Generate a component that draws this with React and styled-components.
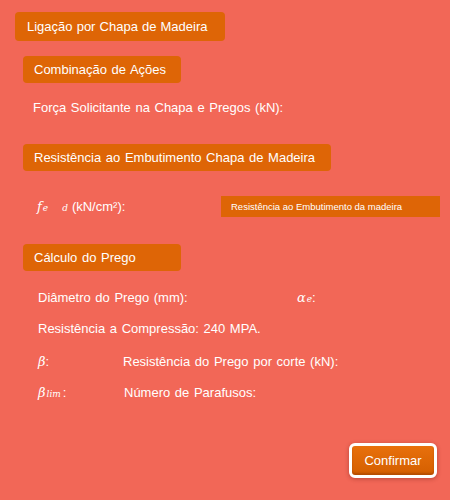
import React from "react";
import styled, { createGlobalStyle } from "styled-components";

const GlobalStyle = createGlobalStyle`
  html, body {
    margin: 0;
    padding: 0;
    background-color: #f26757;
  }
  #root {
    min-height: 500px;
  }
`;

const Page = styled.div`
  width: 450px;
  height: 500px;
  box-sizing: border-box;
  padding: 12px 0 0 0;
  display: flex;
  flex-direction: column;
  font-family: "Liberation Sans", Arial, sans-serif;
  font-size: 13px;
  color: #fff;
  background-color: #f26757;
`;

const Title = styled.div`
  width: 210px;
  height: 29px;
  margin-left: 15px;
  box-sizing: border-box;
  padding-left: 12px;
  display: flex;
  align-items: center;
  background-color: #de6506;
  border-radius: 4px;
  font-size: 13px;
  word-spacing: 0.5px;
`;

const SectionHeader = styled.div`
  width: ${(props) => props.width}px;
  height: 27px;
  margin-left: 23px;
  margin-top: ${(props) => props.top}px;
  box-sizing: border-box;
  padding-left: 11px;
  display: flex;
  align-items: center;
  background-color: #de6506;
  border-radius: 4px;
  font-size: 13px;
  word-spacing: 1px;
`;

const Row = styled.div`
  display: flex;
  align-items: center;
  height: 16px;
  margin-top: ${(props) => props.top}px;
  padding-left: ${(props) => props.left}px;
  word-spacing: 1px;
  white-space: nowrap;
`;

const Cell = styled.span`
  width: ${(props) => (props.width ? `${props.width}px` : "auto")};
  flex-shrink: 0;
  display: inline-flex;
  align-items: baseline;
`;

const MathVar = styled.span`
  font-family: "DejaVu Serif", "Liberation Serif", serif;
  font-style: italic;
  font-size: 13px;
  word-spacing: 0;
`;

const Sub = styled.sub`
  font-family: "DejaVu Serif", "Liberation Serif", serif;
  font-style: italic;
  font-size: 9px;
  vertical-align: -3px;
  margin-left: ${(props) => props.gap || 1}px;
`;

const InfoBox = styled.div`
  width: 219px;
  height: 21px;
  margin-left: auto;
  margin-right: 10px;
  box-sizing: border-box;
  padding-left: 10px;
  display: flex;
  align-items: center;
  background-color: #de6506;
  font-size: 9.5px;
  word-spacing: 0;
`;

const Footer = styled.div`
  margin-top: auto;
  display: flex;
  justify-content: flex-end;
  padding: 0 13px 22px 0;
`;

const ConfirmButton = styled.button`
  width: 88px;
  height: 35px;
  box-sizing: border-box;
  border: 3px solid #fff;
  border-radius: 6px;
  background: linear-gradient(#e8700c, #d45f00);
  box-shadow: 0 1px 4px rgba(120, 30, 20, 0.45),
    inset 0 -2px 2px rgba(120, 40, 0, 0.35);
  color: #fff;
  font-family: "Liberation Sans", Arial, sans-serif;
  font-size: 13px;
  cursor: pointer;
`;

const App = () => {
  return (
    <Page>
      <GlobalStyle />
      <Title>Ligação por Chapa de Madeira</Title>

      <SectionHeader width={158} top={15}>
        Combinação de Ações
      </SectionHeader>
      <Row top={16} left={33}>
        Força Solicitante na Chapa e Pregos (kN):
      </Row>

      <SectionHeader width={308} top={29}>
        Resistência ao Embutimento Chapa de Madeira
      </SectionHeader>
      <Row top={25} left={37} style={{ height: 21 }}>
        <Cell>
          <MathVar>f</MathVar>
          <Sub>e</Sub>
          <Sub gap={14}>d</Sub>
          <span style={{ marginLeft: 4 }}>(kN/cm²):</span>
        </Cell>
        <InfoBox>Resistência ao Embutimento da madeira</InfoBox>
      </Row>

      <SectionHeader width={158} top={27}>
        Cálculo do Prego
      </SectionHeader>
      <Row top={18} left={38}>
        <Cell width={259}>Diâmetro do Prego (mm):</Cell>
        <Cell>
          <MathVar>α</MathVar>
          <Sub>e</Sub>
          <span>:</span>
        </Cell>
      </Row>
      <Row top={15} left={38}>
        Resistência a Compressão: 240 MPA.
      </Row>
      <Row top={17} left={38}>
        <Cell width={85}>
          <MathVar>β</MathVar>
          <span>:</span>
        </Cell>
        <Cell>Resistência do Prego por corte (kN):</Cell>
      </Row>
      <Row top={15} left={38}>
        <Cell width={86}>
          <MathVar>β</MathVar>
          <Sub>lim</Sub>
          <span style={{ marginLeft: 2 }}>:</span>
        </Cell>
        <Cell>Número de Parafusos:</Cell>
      </Row>

      <Footer>
        <ConfirmButton>Confirmar</ConfirmButton>
      </Footer>
    </Page>
  );
};

export default App;
